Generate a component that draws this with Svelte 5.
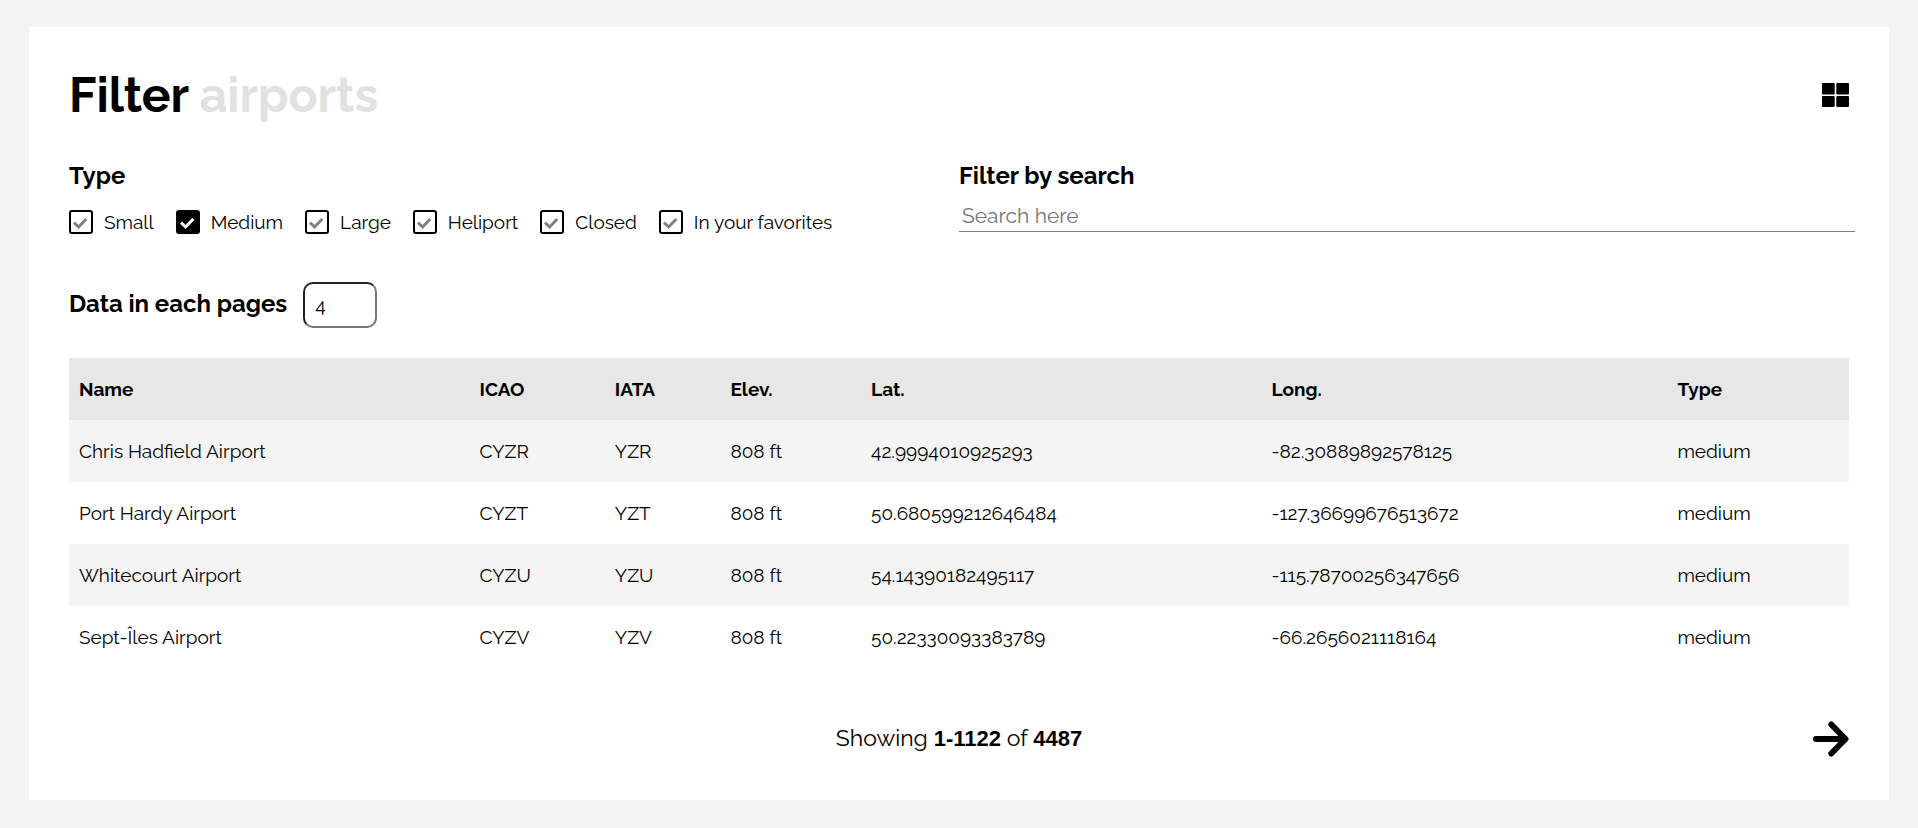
<script>
  let types = $state([
    { id: 'small', label: 'Small', checked: false },
    { id: 'medium', label: 'Medium', checked: true },
    { id: 'large', label: 'Large', checked: false },
    { id: 'heliport', label: 'Heliport', checked: false },
    { id: 'closed', label: 'Closed', checked: false },
    { id: 'favorites', label: 'In your favorites', checked: false }
  ]);
  let perPage = $state(4);
  let search = $state('');

  const columns = [
    { title: 'Name', width: 22.5 },
    { title: 'ICAO', width: 7.6 },
    { title: 'IATA', width: 6.5 },
    { title: 'Elev.', width: 7.9 },
    { title: 'Lat.', width: 22.5 },
    { title: 'Long.', width: 22.8 },
    { title: 'Type', width: 10.2 }
  ];
  const airports = [
    ['Chris Hadfield Airport', 'CYZR', 'YZR', '808 ft', '42.9994010925293', '-82.30889892578125', 'medium'],
    ['Port Hardy Airport', 'CYZT', 'YZT', '808 ft', '50.680599212646484', '-127.36699676513672', 'medium'],
    ['Whitecourt Airport', 'CYZU', 'YZU', '808 ft', '54.14390182495117', '-115.78700256347656', 'medium'],
    ['Sept-Îles Airport', 'CYZV', 'YZV', '808 ft', '50.22330093383789', '-66.2656021118164', 'medium']
  ];
</script>

<main class="card">
  <header class="top">
    <h1>Filter <span>airports</span></h1>
    <button class="icon-button" type="button" aria-label="Grid view">
      <svg width="27" height="24" viewBox="0 0 27 24" aria-hidden="true">
        <rect x="0" y="0" width="12.7" height="11.6" rx="1" />
        <rect x="14.3" y="0" width="12.7" height="11.6" rx="1" />
        <rect x="0" y="12.9" width="12.7" height="11.1" rx="1" />
        <rect x="14.3" y="12.9" width="12.7" height="11.1" rx="1" />
      </svg>
    </button>
  </header>

  <section class="filters">
    <div>
      <h2 id="type-heading">Type</h2>
      <div class="types" role="group" aria-labelledby="type-heading">
        {#each types as type (type.id)}
          <label class="type">
            <span class="box">
              <input type="checkbox" bind:checked={type.checked} />
              <svg width="24" height="24" viewBox="0 0 24 24" aria-hidden="true">
                <path d="M5 12.7 L9.6 17 L17.3 9" />
              </svg>
            </span>
            {type.label}
          </label>
        {/each}
      </div>
    </div>
    <div class="search">
      <h2><label for="search">Filter by search</label></h2>
      <input id="search" type="text" placeholder="Search here" bind:value={search} />
    </div>
  </section>

  <div class="per-page">
    <h2><label for="per-page">Data in each pages</label></h2>
    <input id="per-page" type="text" inputmode="numeric" bind:value={perPage} />
  </div>

  <table>
    <colgroup>
      {#each columns as column}
        <col style="width: {column.width}%" />
      {/each}
    </colgroup>
    <thead>
      <tr>
        {#each columns as column}
          <th scope="col">{column.title}</th>
        {/each}
      </tr>
    </thead>
    <tbody>
      {#each airports as airport}
        <tr>
          {#each airport as value}
            <td>{value}</td>
          {/each}
        </tr>
      {/each}
    </tbody>
  </table>

  <footer>
    <p>Showing <b>1-1122</b> of <b>4487</b></p>
    <button class="icon-button next" type="button" aria-label="Next page">
      <svg width="36" height="36" viewBox="0 0 36 36" aria-hidden="true">
        <path d="M3 18 H32 M18.3 3.5 L32.5 18 L18.3 32.5" />
      </svg>
    </button>
  </footer>
</main>

<style>
  :global(body) {
    background: #f3f3f3;
  }

  .card {
    box-sizing: border-box;
    margin: 27px 29px 28px;
    padding: 40px 40px 43px;
    background: #fff;
    color: #000;
    font: 19px/22px Raleway, Lato, sans-serif;
  }

  h1,
  h2,
  p {
    margin: 0;
  }

  h1 {
    font-size: 48px;
    line-height: 56px;
    font-weight: 700;
  }

  h1 span {
    color: #e1e1e1;
  }

  h2 {
    font-size: 24px;
    line-height: 28px;
    font-weight: 700;
  }

  .top {
    display: flex;
    align-items: center;
    justify-content: space-between;
  }

  .icon-button {
    display: flex;
    padding: 0;
    border: 0;
    background: none;
    cursor: pointer;
  }

  .filters {
    display: grid;
    grid-template-columns: 1fr 1fr;
    margin-top: 39px;
  }

  .types {
    display: flex;
    flex-wrap: wrap;
    gap: 22px;
    margin-top: 20px;
  }

  .type {
    display: flex;
    align-items: center;
    gap: 11px;
    line-height: 20px;
    cursor: pointer;
  }

  .box {
    display: grid;
  }

  .box > :global(*) {
    grid-area: 1 / 1;
  }

  .box input {
    appearance: none;
    width: 24px;
    height: 24px;
    margin: 0;
    border: 2px solid #000;
    border-radius: 3px;
    background: #fff;
  }

  .box input:checked {
    background: #000;
  }

  .box svg {
    fill: none;
    stroke: #808080;
    stroke-width: 3;
    pointer-events: none;
  }

  .box input:checked + svg {
    stroke: #fff;
  }

  .search input {
    box-sizing: border-box;
    width: calc(100% + 6px);
    height: 33px;
    margin-top: 9px;
    padding: 0 3px;
    border: 0;
    border-bottom: 1px solid #808080;
    background: none;
    font: inherit;
    font-size: 21px;
  }

  .search input::placeholder {
    color: #757575;
  }

  .per-page {
    display: flex;
    align-items: center;
    gap: 16px;
    margin-top: 48px;
  }

  .per-page h2 {
    padding-bottom: 2px;
  }

  .per-page input {
    box-sizing: border-box;
    width: 74px;
    height: 46px;
    padding: 0 10px;
    border: 2px inset #767676;
    border-radius: 10px;
    background: #fff;
    font: inherit;
  }

  table {
    width: 100%;
    margin-top: 30px;
    border-collapse: collapse;
    table-layout: fixed;
  }

  th,
  td {
    padding: 20px 10px;
    text-align: left;
  }

  th {
    font-weight: 700;
  }

  thead tr {
    background: #e7e7e7;
  }

  tbody tr:nth-child(odd) {
    background: #f4f4f4;
  }

  footer {
    display: grid;
    grid-template-columns: 1fr auto 1fr;
    align-items: center;
    margin-top: 53px;
    font-size: 23px;
    line-height: 28px;
  }

  footer p {
    grid-column: 2;
    padding-bottom: 2px;
  }

  footer b {
    font-family: "Liberation Sans", Arial, sans-serif;
    font-size: 22px;
  }

  .next {
    justify-self: end;
  }

  .next path {
    fill: none;
    stroke: #000;
    stroke-width: 6;
    stroke-linecap: round;
    stroke-linejoin: round;
  }
</style>
